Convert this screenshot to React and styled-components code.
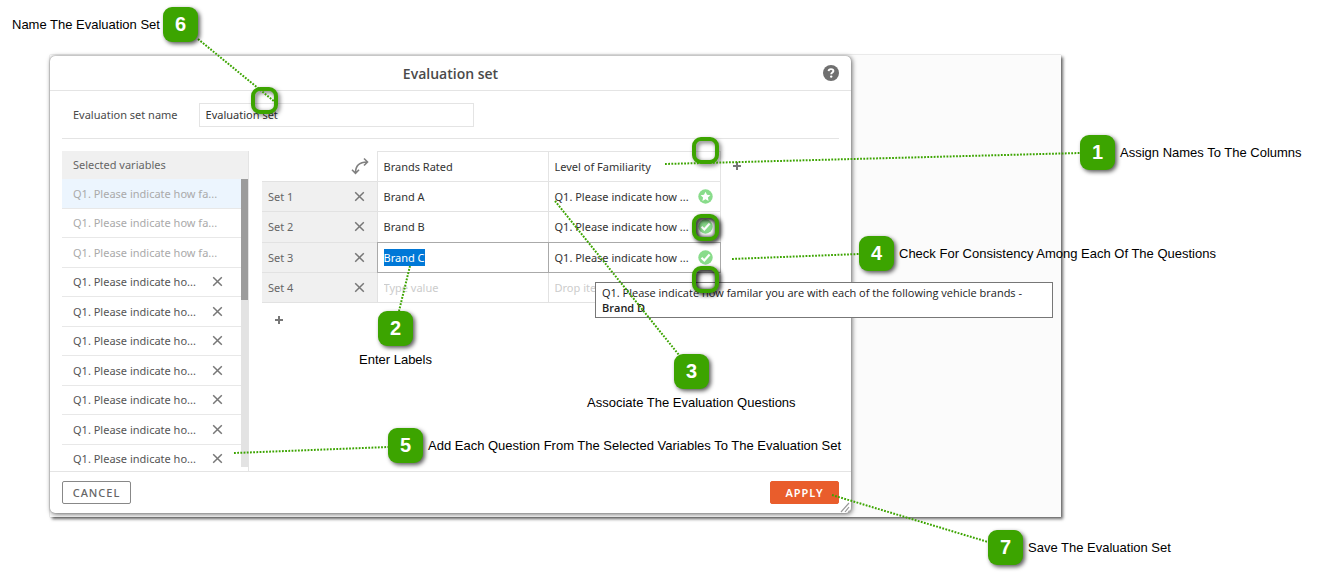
import React, { useEffect, useRef } from 'react';
import styled, { createGlobalStyle } from 'styled-components';

const GlobalStyle = createGlobalStyle`
  * {
    box-sizing: border-box;
  }

  body {
    margin: 0;
    background: #fff;
    color: #4a4a4a;
    font-family: 'Noto Sans', 'Open Sans', sans-serif;
    font-size: 11px;
  }
`;

const Page = styled.main`
  position: relative;
  padding: 55px 257px 59px 50px;
`;

const Backdrop = styled.div`
  padding: 1px 210px 4px 0;
  background: #fbfbfb;
  box-shadow: 2px 2px 3px rgba(0, 0, 0, 0.6), 0 0 1px rgba(0, 0, 0, 0.3);
`;

const Dialog = styled.section`
  position: relative;
  background: #fff;
  border-radius: 5px;
  box-shadow: 0 0 1px #777, 1px 1px 5px rgba(0, 0, 0, 0.6);
`;

const Header = styled.header`
  display: flex;
  align-items: center;
  height: 35px;
  padding: 0 12px 0 28px;
  border-bottom: 1px solid #e4e4e4;
`;

const Title = styled.h1`
  flex: 1;
  margin: 0;
  font-family: 'Open Sans', sans-serif;
  font-size: 14px;
  font-weight: 600;
  text-align: center;
`;

const IconButton = styled.button`
  display: inline-flex;
  align-items: center;
  justify-content: center;
  padding: 0;
  border: 0;
  background: none;
  color: #777;
`;

const NameRow = styled.div`
  display: flex;
  align-items: center;
  gap: 21px;
  height: 48px;
  margin: 0 12px;
  padding-left: 11px;
  border-bottom: 1px solid #e4e4e4;
`;

const NameInput = styled.input`
  width: 275px;
  height: 24px;
  padding: 0 6px;
  border: 1px solid #e4e4e4;
  color: #333;
  font: inherit;
`;

const Body = styled.div`
  display: flex;
  gap: 13px;
  height: 332px;
  padding: 12px 12px 0;
`;

const Sidebar = styled.aside`
  width: 187px;
  border-right: 1px solid #e4e4e4;
`;

const SidebarTitle = styled.h2`
  height: 28px;
  margin: 0;
  padding-left: 11px;
  background: #f0f0f0;
  color: #666;
  font-size: 11px;
  font-weight: 400;
  line-height: 27px;
`;

const ListPane = styled.div`
  display: flex;
  height: 292px;
  overflow: hidden;
`;

const VariableList = styled.ul`
  display: flex;
  flex: 1;
  flex-direction: column;
  height: 295px;
  margin: 0;
  padding: 0;
  list-style: none;
`;

const Variable = styled.li`
  display: flex;
  flex: 1;
  align-items: center;
  justify-content: space-between;
  padding: 0 18px 0 11px;
  border-bottom: 1px solid #e8e8e8;
  background: ${props => props.$active ? '#ecf5fe' : '#fff'};
  color: ${props => props.$used ? '#aaa' : '#555'};
  white-space: nowrap;
`;

const Scrollbar = styled.div`
  width: 7px;
  height: 288px;
  background: #e3e3e3;
`;

const Thumb = styled.div`
  height: 121px;
  background: #9c9c9c;
`;

const Editor = styled.div`
  display: flex;
  align-items: flex-start;
  gap: 11px;
`;

const Table = styled.table`
  width: 458px;
  height: 152px;
  table-layout: fixed;
  border-collapse: collapse;

  tr {
    height: 30px;
  }
`;

const HeadCell = styled.th`
  padding: 0;
  border: ${props => props.$plain ? '0' : '1px solid #e4e4e4'};
  font-weight: 400;
  text-align: right;
`;

const SwapButton = styled(IconButton)`
  margin-right: 8px;
  vertical-align: middle;
`;

const RowHead = styled.th`
  padding: 0 12px 0 6px;
  border-top: 1px solid #e2e2e2;
  border-bottom: 1px solid #e2e2e2;
  background: #f0f0f0;
  color: #666;
  font-weight: 400;
`;

const RowHeadContent = styled.div`
  display: flex;
  align-items: center;
  justify-content: space-between;
`;

const Cell = styled.td`
  padding: 0;
  border: 1px ${props => props.$active ? 'double #aaa' : 'solid #e2e2e2'};
`;

const CellInput = styled.input`
  display: block;
  width: 100%;
  height: 17px;
  padding: 0 6px;
  border: 0;
  outline: 0;
  background: none;
  color: #333;
  font: inherit;
  line-height: 17px;

  &::placeholder {
    color: #ccc;
  }

  &::selection {
    background: #0078d7;
    color: #fff;
  }
`;

const Question = styled.div`
  display: flex;
  align-items: center;
  justify-content: space-between;
  padding: 0 7px 0 6px;
  color: ${props => props.$empty ? '#ccc' : '#333'};
  line-height: 17px;
  white-space: nowrap;
`;

const AddColumn = styled(IconButton)`
  width: 10px;
  height: 30px;
`;

const AddRow = styled(IconButton)`
  width: 34px;
  height: 34px;
`;

const Footer = styled.footer`
  display: flex;
  align-items: center;
  justify-content: space-between;
  height: 42px;
  padding: 0 12px;
  border-top: 1px solid #e4e4e4;
`;

const Button = styled.button`
  width: 69px;
  height: 23px;
  padding: 0;
  border: 1px solid ${props => props.$primary ? '#e95d2c' : '#888'};
  border-radius: 2px;
  background: ${props => props.$primary ? '#e95d2c' : '#fff'};
  color: ${props => props.$primary ? '#fff' : '#666'};
  font: inherit;
  font-weight: ${props => props.$primary ? 600 : 500};
  letter-spacing: 1px;
`;

const Resize = styled.svg`
  position: absolute;
  right: 0;
  bottom: 0;
`;

const Tooltip = styled.div`
  position: absolute;
  top: 282px;
  left: 595px;
  width: 458px;
  padding: 2px 6px;
  border: 1px solid #777;
  background: #fff;
  color: #222;
  font-family: 'Open Sans', sans-serif;
  line-height: 15px;
  white-space: nowrap;
`;

const Strong = styled.strong`
  font-weight: 600;
`;

const Lines = styled.svg`
  position: absolute;
  top: 0;
  left: 0;
  width: 100%;
  height: 100%;
  pointer-events: none;
`;

const Ring = styled.span`
  position: absolute;
  width: 27px;
  height: 27px;
  border: 4px solid #3ca400;
  border-radius: 9px;
  box-shadow: inset 0 0 4px rgba(0, 0, 0, ${props => props.$dark ? 0.6 : 0.1});
  filter: drop-shadow(2px 2px 2px rgba(0, 0, 0, ${props => props.$dark ? 0.9 : 0.5}));
  pointer-events: none;
`;

const Badge = styled.span`
  position: absolute;
  width: 35px;
  height: 35px;
  border-radius: 9px;
  background: #3ca400;
  box-shadow: 2px 2px 4px rgba(0, 0, 0, 0.65);
  color: #fff;
  font: bold 20px/35px 'Liberation Sans', Arial, sans-serif;
  text-align: center;
`;

const Note = styled.span`
  position: absolute;
  color: #000;
  font: 13px/18px 'Liberation Sans', Arial, sans-serif;
  white-space: nowrap;
`;

const variables = Array.from({ length: 10 }, (_, i) => ({
  id: i,
  used: i < 3,
  text: i < 3 ? 'Q1. Please indicate how fa...' : 'Q1. Please indicate ho...',
}));

const sets = [
  { name: 'Set 1', label: 'Brand A', question: 'Q1. Please indicate how ...', mark: 'star' },
  { name: 'Set 2', label: 'Brand B', question: 'Q1. Please indicate how ...', mark: 'check' },
  { name: 'Set 3', label: 'Brand C', question: 'Q1. Please indicate how ...', mark: 'check', active: true },
  { name: 'Set 4', label: '', question: '' },
];

const callouts = [
  { n: 1, x: 1080, y: 135, note: 'Assign Names To The Columns', nx: 1120, ny: 144, line: [665, 164, 1080, 153] },
  { n: 2, x: 378, y: 311, note: 'Enter Labels', nx: 359, ny: 351, line: [410, 266, 399, 311] },
  { n: 3, x: 674, y: 354, note: 'Associate The Evaluation Questions', nx: 587, ny: 394, line: [555, 201, 679, 355] },
  { n: 4, x: 859, y: 236, note: 'Check For Consistency Among Each Of The Questions', nx: 899, ny: 245, line: [732, 259, 859, 254] },
  { n: 5, x: 388, y: 428, note: 'Add Each Question From The Selected Variables To The Evaluation Set', nx: 428, ny: 437, line: [234, 453, 388, 447] },
  { n: 6, x: 163, y: 7, note: 'Name The Evaluation Set', nx: 12, ny: 16, line: [198, 39, 275, 102] },
  { n: 7, x: 988, y: 530, note: 'Save The Evaluation Set', nx: 1028, ny: 539, line: [832, 495, 988, 542] },
];

const rings = [
  { x: 251, y: 87 },
  { x: 692, y: 137 },
  { x: 692, y: 214, dark: true },
  { x: 692, y: 266, dark: true },
];

const CloseIcon = () => (
  <svg width="11" height="11" viewBox="0 0 11 11" stroke="#777" strokeWidth="1.5">
    <path d="M1.200 1.200l8.600 8.600M9.800 1.200l-8.600 8.600" />
  </svg>
);

const PlusIcon = () => (
  <svg width="8" height="8" viewBox="0 0 8 8" stroke="#777" strokeWidth="2">
    <path d="M4 0v8M0 4h8" />
  </svg>
);

const HelpIcon = () => (
  <svg width="16" height="16" viewBox="0 0 16 16">
    <circle cx="8" cy="8" r="8" fill="#707070" />
    <path d="M5.6 6.1C5.7 4.7 6.7 4.1 8 4.1c1.4 0 2.4.7 2.4 1.9 0 1.6-2.2 1.6-2.2 3.2" fill="none" stroke="#fff" strokeWidth="1.9" />
    <circle cx="8.2" cy="11.6" r="1.2" fill="#fff" />
  </svg>
);

const SwapIcon = () => (
  <svg width="18" height="18" viewBox="0 0 18 18" fill="none" stroke="#808080" strokeWidth="1.6">
    <path d="M4.500 16C4.500 8.500 8.500 5 16 5M1 12.800l3.500 3.500L8 12.800M13 1.500L16.500 5 13 8.500" />
  </svg>
);

const Mark = ({ type }) => (
  <svg width="15" height="15" viewBox="0 0 15 15">
    <circle cx="7.500" cy="7.500" r="7.200" fill="#89dc8b" />
    {type === 'star'
      ? <path d="M7.500 2.700l1.500 3.100 3.400.4-2.500 2.400.7 3.400-3.100-1.700L4.400 12l.7-3.400-2.500-2.400 3.400-.4z" fill="#fff" />
      : <path d="M3.500 7.800l2.800 2.700 5.300-6" fill="none" stroke="#fff" strokeWidth="2.200" />}
  </svg>
);

const App = () => {
  const labelRef = useRef(null);

  // Start with the label being edited selected
  useEffect(() => {
    labelRef.current.focus();
    labelRef.current.select();
  }, []);

  return (
    <Page>
      <GlobalStyle />
      <Backdrop>
        <Dialog aria-label="Evaluation set">
          <Header>
            <Title>Evaluation set</Title>
            <IconButton aria-label="Help"><HelpIcon /></IconButton>
          </Header>

          <NameRow>
            <label htmlFor="setName">Evaluation set name</label>
            <NameInput id="setName" type="text" defaultValue="Evaluation set" />
          </NameRow>

          <Body>
            <Sidebar>
              <SidebarTitle>Selected variables</SidebarTitle>
              <ListPane>
                <VariableList>
                  {variables.map(v => (
                    <Variable key={v.id} $used={v.used} $active={v.id === 0}>
                      {v.text}
                      {!v.used && <IconButton aria-label="Remove variable"><CloseIcon /></IconButton>}
                    </Variable>
                  ))}
                </VariableList>
                <Scrollbar><Thumb /></Scrollbar>
              </ListPane>
            </Sidebar>

            <div>
              <Editor>
                <Table>
                  <colgroup>
                    <col width="115" />
                    <col width="171" />
                    <col width="172" />
                  </colgroup>
                  <thead>
                    <tr>
                      <HeadCell $plain>
                        <SwapButton aria-label="Swap rows and columns"><SwapIcon /></SwapButton>
                      </HeadCell>
                      <HeadCell><CellInput aria-label="Column 1 name" defaultValue="Brands Rated" /></HeadCell>
                      <HeadCell><CellInput aria-label="Column 2 name" defaultValue="Level of Familiarity" /></HeadCell>
                    </tr>
                  </thead>
                  <tbody>
                    {sets.map(set => (
                      <tr key={set.name}>
                        <RowHead scope="row">
                          <RowHeadContent>
                            {set.name}
                            <IconButton aria-label={`Remove ${set.name}`}><CloseIcon /></IconButton>
                          </RowHeadContent>
                        </RowHead>
                        <Cell $active={set.active}>
                          <CellInput
                            ref={set.active ? labelRef : null}
                            aria-label={`${set.name} label`}
                            placeholder="Type value"
                            defaultValue={set.label}
                          />
                        </Cell>
                        <Cell $active={set.active}>
                          <Question $empty={!set.question}>
                            {set.question || 'Drop item'}
                            {set.mark && <Mark type={set.mark} />}
                          </Question>
                        </Cell>
                      </tr>
                    ))}
                  </tbody>
                </Table>
                <AddColumn aria-label="Add column"><PlusIcon /></AddColumn>
              </Editor>
              <AddRow aria-label="Add set"><PlusIcon /></AddRow>
            </div>
          </Body>

          <Footer>
            <Button>CANCEL</Button>
            <Button $primary>APPLY</Button>
          </Footer>
          <Resize width="12" height="12" viewBox="0 0 12 12" stroke="#999" strokeWidth="1.2">
            <path d="M2 11l8-9M6 11l4-5M9.500 11l1-1.500" />
          </Resize>
        </Dialog>
      </Backdrop>

      <Tooltip role="tooltip">
        Q1. Please indicate how familar you are with each of the following vehicle brands -<br />
        <Strong>Brand D</Strong>
      </Tooltip>

      {rings.map(r => (
        <Ring key={`${r.x}-${r.y}`} $dark={r.dark} style={{ left: r.x, top: r.y }} />
      ))}
      <Lines stroke="#3ca400" strokeWidth="2" strokeDasharray="1.8 1.4">
        {callouts.map(({ n, line: [x1, y1, x2, y2] }) => (
          <line key={n} x1={x1} y1={y1} x2={x2} y2={y2} />
        ))}
      </Lines>
      {callouts.map(c => (
        <React.Fragment key={c.n}>
          <Badge style={{ left: c.x, top: c.y }}>{c.n}</Badge>
          <Note style={{ left: c.nx, top: c.ny }}>{c.note}</Note>
        </React.Fragment>
      ))}
    </Page>
  );
};

export default App;
